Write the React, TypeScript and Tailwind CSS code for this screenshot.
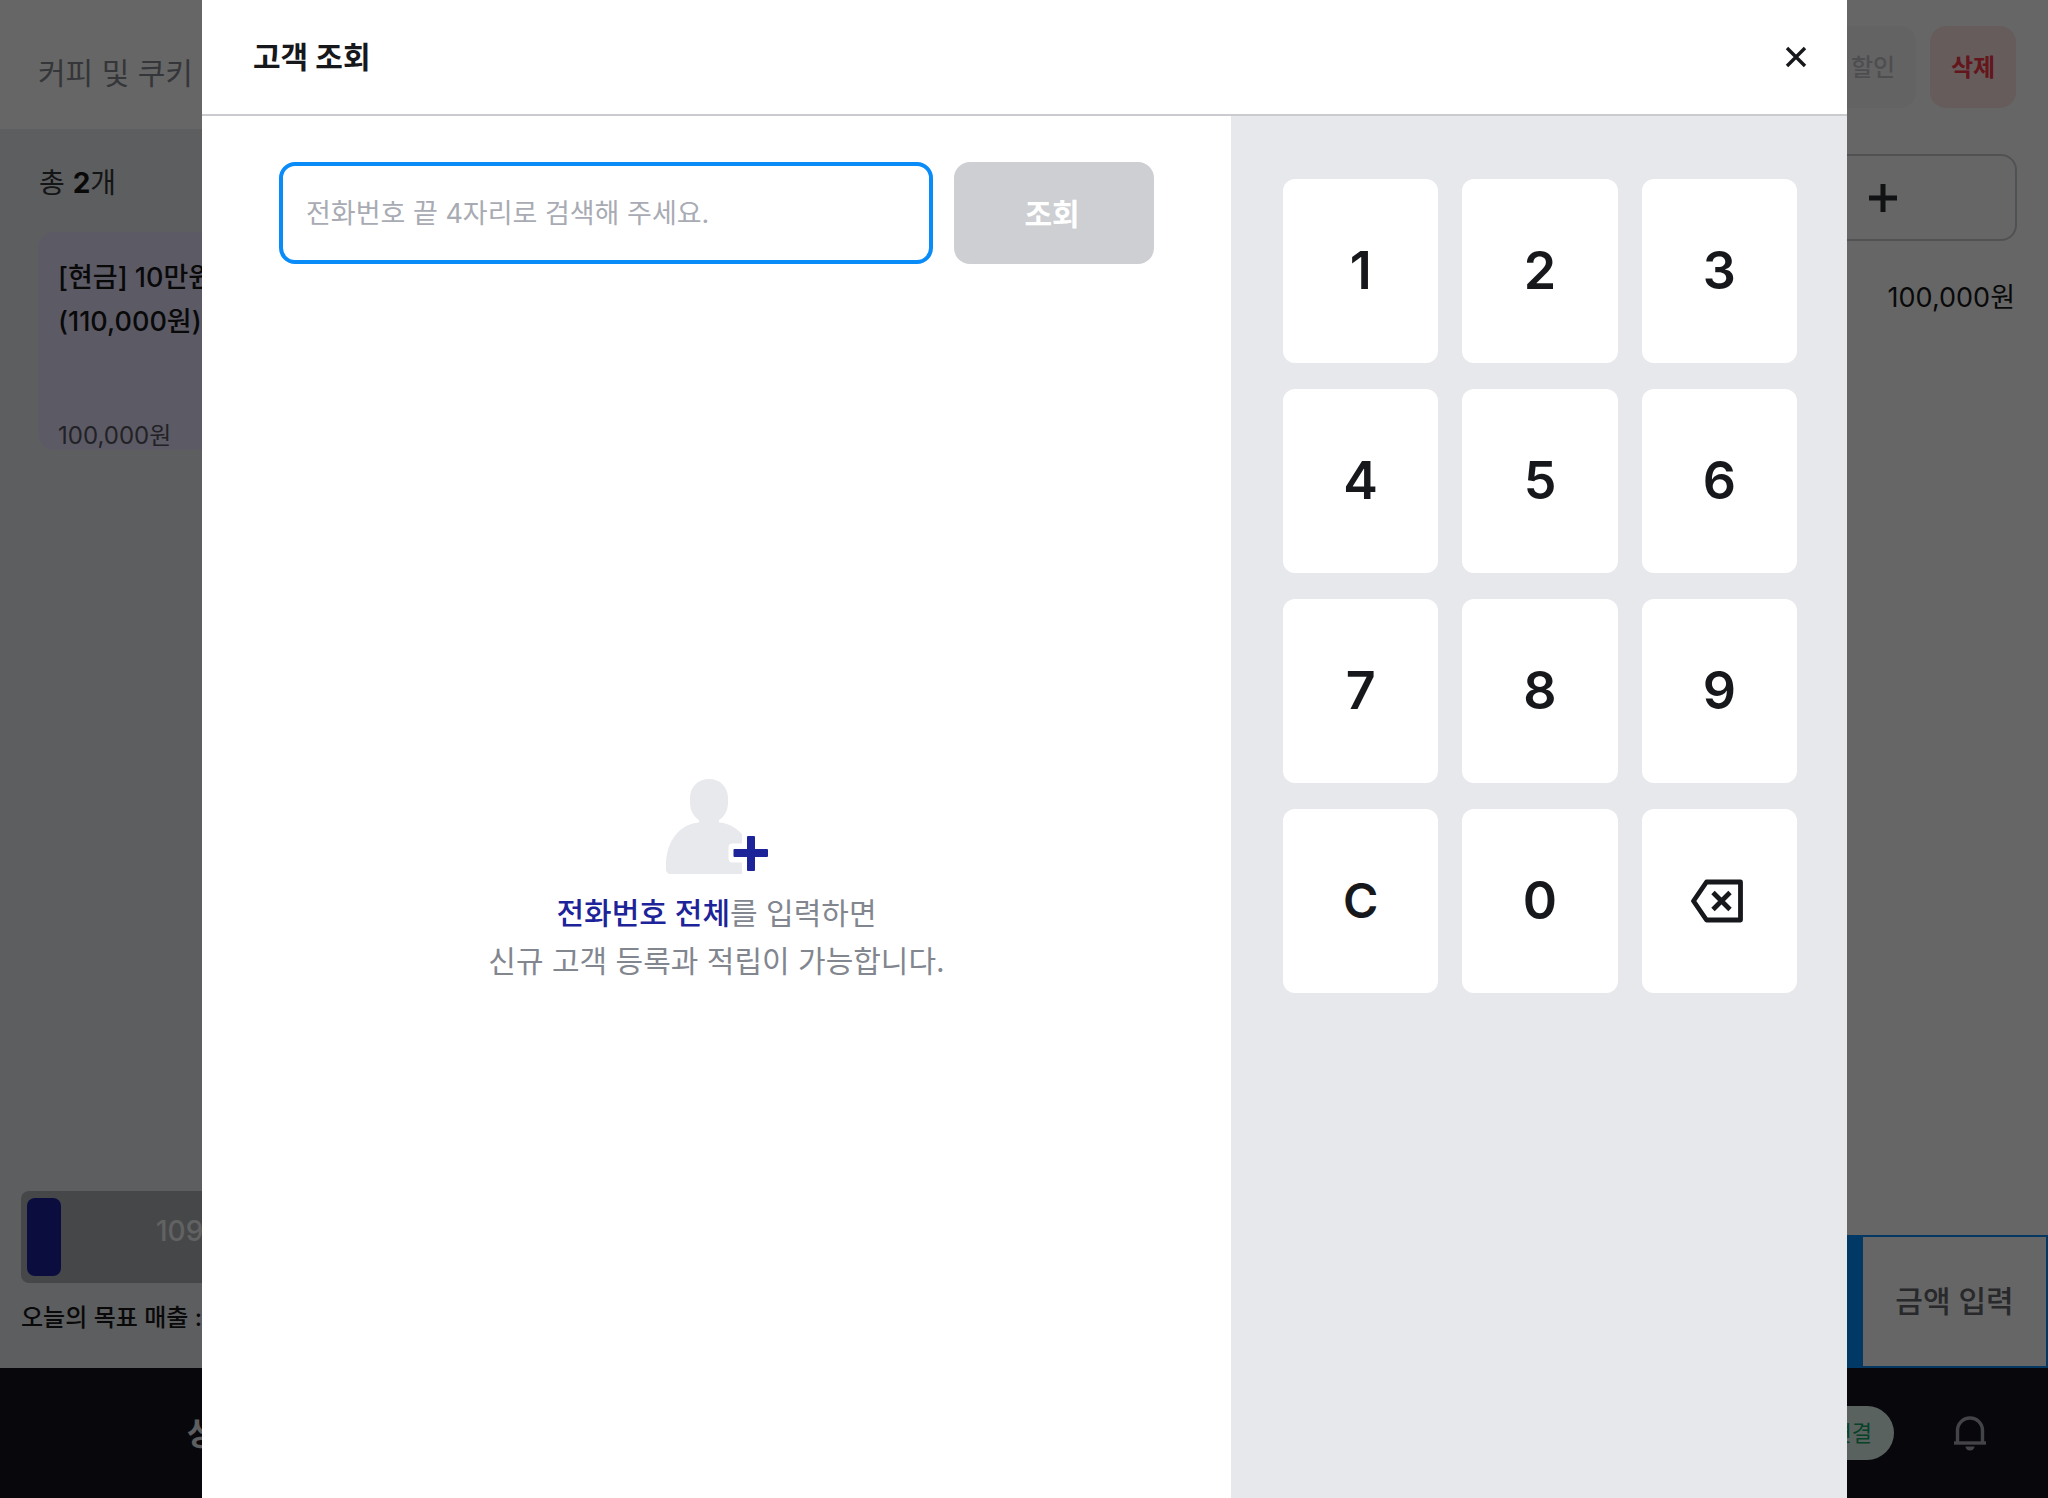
import React from "react";

const keys = ["1", "2", "3", "4", "5", "6", "7", "8", "9", "C", "0"];

const PlusIcon: React.FC = () => (
  <svg width="30" height="30" viewBox="0 0 30 30" aria-hidden="true">
    <path d="M15 1v28M1 15h28" stroke="currentColor" strokeWidth="5" />
  </svg>
);

const CloseIcon: React.FC = () => (
  <svg width="22" height="22" viewBox="0 0 22 22" aria-hidden="true">
    <path
      d="M2 2l18 18M20 2L2 20"
      stroke="currentColor"
      strokeWidth="3.4"
    />
  </svg>
);

const BellIcon: React.FC = () => (
  <svg width="32" height="35" viewBox="0 0 32 35" fill="none" aria-hidden="true">
    <path
      d="M3.5 27V14.5a12.5 12.5 0 0 1 25 0V27"
      stroke="currentColor"
      strokeWidth="3.4"
    />
    <path d="M0 27h32" stroke="currentColor" strokeWidth="3.4" />
    <path d="M11.5 30.5h9a4.5 4 0 0 1-9 0z" fill="currentColor" />
  </svg>
);

const BackspaceIcon: React.FC = () => (
  <svg width="52" height="44" viewBox="0 0 52 44" fill="none" aria-hidden="true">
    <path
      d="M15.5 3H49.5V41H15.5L2.5 22z"
      stroke="currentColor"
      strokeWidth="4.8"
      strokeLinejoin="round"
    />
    <path
      d="M22 13.500l17 17M39 13.500l-17 17"
      stroke="currentColor"
      strokeWidth="4.8"
    />
  </svg>
);

const AddPersonIcon: React.FC = () => (
  <svg width="102" height="96" viewBox="0 0 102 96" aria-hidden="true">
    <path
      d="M43 0C54 0 62 8 62 19v4c0 8-3 14-9 18v2.500c8 0 17 5 23 11.500V95H4.500C2 95 0 93 0 90.500V86C0 63 13 45 33 43.500V41C27 37 24 31 24 23v-4C24 8 32 0 43 0z"
      fill="#e8e9ec"
    />
    <rect x="76" y="50" width="18" height="46" fill="#ffffff" />
    <rect x="62.500" y="64.500" width="45" height="19" rx="4" fill="#ffffff" />
    <rect x="81" y="57" width="8" height="35" rx="1" fill="#1d2399" />
    <rect x="67.500" y="70" width="34.500" height="8" rx="1" fill="#1d2399" />
  </svg>
);

const PosScreen: React.FC = () => (
  <div className="flex flex-col min-h-screen">
    <main className="flex flex-1">
      <section className="flex flex-col flex-1 bg-[#e9eaed]">
        <header className="flex items-center h-[129px] pt-[18px] pl-[38px] bg-white text-[30px] font-normal text-[#85888f]">
          커피 및 쿠키
        </header>
        <p className="pt-[34px] pl-[39px] text-[28px] leading-[40px] text-[#34363a]">
          총 <b className="font-bold text-[#17181b]">2</b>개
        </p>
        <div className="pt-[29px] pl-[38px]">
          <button className="flex flex-col justify-between items-start w-[268px] h-[218px] pt-6 pl-5 rounded-2xl bg-[#e6e2fd] text-left">
            <span className="text-[27px] leading-[44px] font-medium text-[#17181b]">
              [현금] 10만원권
              <br />
              (110,000원)
            </span>
            <span className="text-[24px] leading-[28px] text-[#55555f]">
              100,000원
            </span>
          </button>
        </div>
        <div className="mt-auto pl-[21px] pr-5 pb-8">
          <div className="flex items-center w-[400px] h-[92px] p-[6px] rounded-lg bg-[#afb1b6]">
            <div className="w-[34px] h-[78px] rounded-lg bg-[#1c219f]" />
            <span className="pl-[95px] pb-3 text-[28px] font-medium text-[#f3f4f6]">
              109,000원
            </span>
          </div>
          <p className="pt-[17px] text-[24px] leading-9 font-medium text-[#17181b]">
            오늘의 목표 매출 : 1,000,000원
          </p>
        </div>
      </section>

      <section className="flex flex-col w-[900px] bg-white">
        <div className="flex justify-end gap-[14px] pt-[26px] pr-8">
          <button className="w-[86px] h-[82px] pt-[2px] rounded-2xl bg-[#f7f7f9] text-[24px] font-medium text-[#c3c4c8]">
            할인
          </button>
          <button className="w-[86px] h-[82px] pt-[2px] rounded-2xl bg-[#ffe6e6] text-[24px] font-bold text-[#f83846]">
            삭제
          </button>
        </div>
        <div className="flex mt-[46px] ml-8 mr-[31px] border-2 border-[#c9cbd0] rounded-2xl">
          <span className="flex-1" />
          <button
            aria-label="수량 추가"
            className="flex justify-center items-center w-[264px] h-[83px] text-[#2b2d31]"
          >
            <PlusIcon />
          </button>
        </div>
        <p className="pt-[37px] pr-[33px] text-right text-[27px] leading-[40px] text-[#17181b]">
          100,000원
        </p>
        <div className="flex mt-auto h-[133px]">
          <button className="flex-1 bg-[#008eff]" aria-label="결제" />
          <button className="w-[187px] border-2 border-[#0a8cf8] text-[30px] font-medium text-[#63666c]">
            금액 입력
          </button>
        </div>
      </section>
    </main>

    <footer className="flex justify-between items-center h-[130px] pl-[187px] pr-[62px] bg-[#14121f]">
      <a href="#products" className="pt-[2px] text-[32px] font-bold text-[#e9eaed]">
        상품
      </a>
      <div className="flex items-center gap-[60px]">
        <span className="flex items-center h-[54px] px-[22px] rounded-full bg-[#e2f5ee] text-[22px] text-[#12a566]">
          단말기 연결
        </span>
        <button aria-label="알림" className="text-[#a9abb3]">
          <BellIcon />
        </button>
      </div>
    </footer>
  </div>
);

const CustomerSearchModal: React.FC = () => (
  <div className="fixed inset-0 flex pl-[202px] pr-[201px] bg-black/60">
    <div
      role="dialog"
      aria-labelledby="modal-title"
      className="flex flex-col flex-1 bg-white"
    >
      <div className="flex justify-between items-center h-[116px] pl-[51px] pr-10 border-b-2 border-[#c9cbce]">
        <h1 id="modal-title" className="text-[30px] font-bold text-[#17181b]">
          고객 조회
        </h1>
        <button aria-label="닫기" className="text-[#17181b]">
          <CloseIcon />
        </button>
      </div>

      <div className="flex flex-1">
        <div className="flex flex-col flex-1 px-[77px] pt-[46px]">
          <form className="flex gap-[21px]">
            <input
              type="text"
              aria-label="전화번호"
              placeholder="전화번호 끝 4자리로 검색해 주세요."
              className="flex-1 min-w-0 h-[102px] px-[23px] border-4 border-[#0a8cf8] rounded-2xl outline-none text-[27px] text-[#17181b] placeholder:text-[#a8abb3]"
            />
            <button
              type="button"
              className="w-[200px] h-[102px] pt-[2px] pr-1 rounded-2xl bg-[#cdcfd3] text-[30px] font-bold text-white"
            >
              조회
            </button>
          </form>
          <div className="flex flex-col flex-1 justify-center items-center gap-[14px] pt-[2px]">
            <AddPersonIcon />
            <p className="text-center text-[30px] leading-[48px] text-[#82868f]">
              <span className="font-medium text-[#1d2399]">전화번호 전체</span>를
              입력하면
              <br />
              신규 고객 등록과 적립이 가능합니다.
            </p>
          </div>
        </div>

        <div className="w-[616px] pt-[63px] pl-[52px] pr-[50px] bg-[#e7e8ec]">
          <div className="grid grid-cols-3 gap-x-6 gap-y-[26px]">
            {keys.map((key) => (
              <button
                key={key}
                className={`h-[184px] rounded-xl bg-white font-semibold text-[#17181b] ${
                  key === "C" ? "text-[48px]" : "text-[52px]"
                }`}
              >
                {key}
              </button>
            ))}
            <button
              aria-label="지우기"
              className="flex justify-center items-center h-[184px] pr-1 rounded-xl bg-white text-[#17181b]"
            >
              <BackspaceIcon />
            </button>
          </div>
        </div>
      </div>
    </div>
  </div>
);

const App: React.FC = () => {
  return (
    <div
      lang="ko"
      className="font-['Inter','Noto_Sans_CJK_KR',sans-serif] text-[#17181b]"
    >
      <PosScreen />
      <CustomerSearchModal />
    </div>
  );
};

export default App;
